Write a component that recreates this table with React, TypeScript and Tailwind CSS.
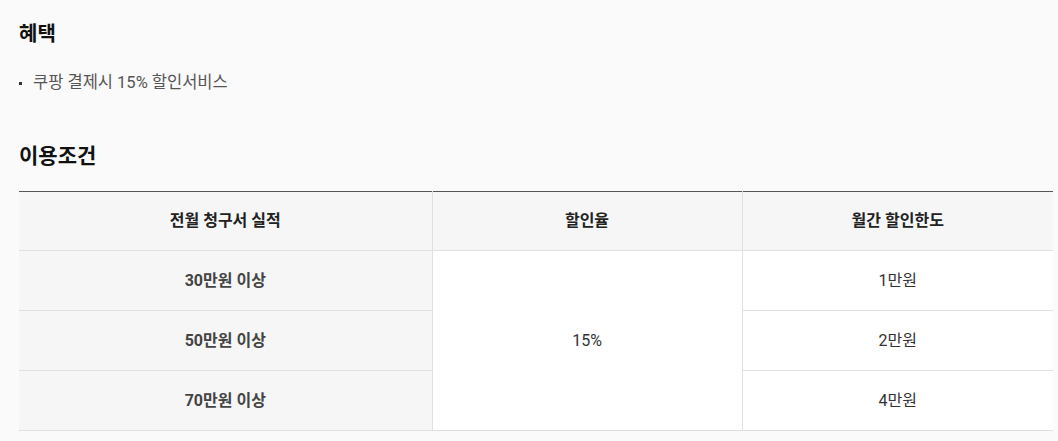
const rows = [
  { spend: "30만원 이상", limit: "1만원" },
  { spend: "50만원 이상", limit: "2만원" },
  { spend: "70만원 이상", limit: "4만원" },
];

export default function App() {
  return (
    <div className="min-h-[441px] bg-[#fafafa] px-[19px] pt-[20px] font-['Roboto','Noto_Sans_CJK_KR',sans-serif] text-[#333]">
      <h3 className="text-[20px] font-bold leading-[28px] text-[#111]">혜택</h3>
      <ul className="mt-[24px]">
        <li className="flex items-center text-[16.5px] leading-[22px] text-[#555]">
          <span className="mr-[11px] inline-block h-[3px] w-[3px] bg-[#333]" />
          쿠팡 결제시 15% 할인서비스
        </li>
      </ul>
      <h3 className="mt-[48px] text-[21px] font-bold leading-[28px] text-[#111]">이용조건</h3>
      <table className="mt-[21px] w-[1034px] table-fixed border-collapse border-t border-t-[#555] text-center text-[16px]">
        <colgroup>
          <col className="w-[413px]" />
          <col className="w-[310px]" />
          <col />
        </colgroup>
        <thead>
          <tr className="h-[59px] bg-[#f6f6f6]">
            <th className="border-b border-r border-[#e0e0e0] font-bold text-[#222]">전월 청구서 실적</th>
            <th className="border-b border-r border-[#e0e0e0] font-bold text-[#222]">할인율</th>
            <th className="border-b border-[#e0e0e0] font-bold text-[#222]">월간 할인한도</th>
          </tr>
        </thead>
        <tbody>
          {rows.map((row, i) => (
            <tr key={row.spend} className="h-[60px]">
              <th className="border-b border-r border-[#e0e0e0] bg-[#f6f6f6] font-bold text-[#444]">
                {row.spend}
              </th>
              {i === 0 && (
                <td rowSpan={3} className="border-b border-r border-[#e0e0e0] bg-white text-[#333]">
                  15%
                </td>
              )}
              <td className="border-b border-[#e0e0e0] bg-white text-[#333]">{row.limit}</td>
            </tr>
          ))}
        </tbody>
      </table>
    </div>
  );
}
